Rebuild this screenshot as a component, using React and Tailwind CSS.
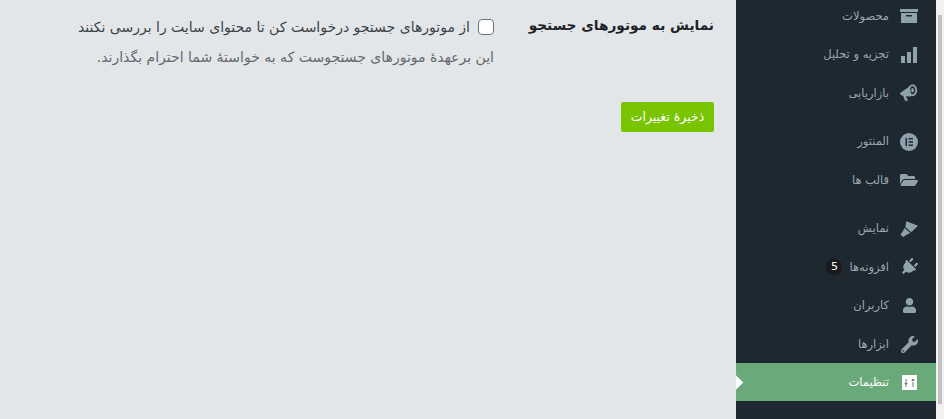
import { FaFolderOpen, FaUser, FaWrench, FaPlug } from "react-icons/fa";

const ArchiveIcon = () => (
  <svg width="18" height="18" viewBox="0 0 18 18" fill="currentColor">
    <path d="M0 2h18v3H0z" />
    <path fillRule="evenodd" d="M1 6h16v10H1zM6 8v1.500h6V8z" />
  </svg>
);

const BarsIcon = () => (
  <svg width="18" height="18" viewBox="0 0 18 18" fill="currentColor">
    <path d="M1 10h4v7H1zM7 6h4v11H7zM13 1h4v16h-4z" />
  </svg>
);

const MegaphoneIcon = () => (
  <svg width="20" height="20" viewBox="0 0 20 20" fill="currentColor">
    <path d="M0 10L11 2.500l1.500 11.500-6-.5 2.500 5H5.500L3.500 13 1 12.500z" />
    <path fillRule="evenodd" d="M14 .5c3 0 5 3 5 6.500s-2 6.500-5 6.500-5-3-5-6.500 2-6.500 5-6.500zM14 2.500c-1.700 0-3 2-3 4.500s1.300 4.500 3 4.500 3-2 3-4.500-1.300-4.500-3-4.500z" />
    <ellipse cx="14" cy="7" rx="1.500" ry="2.500" />
  </svg>
);

const ElementorIcon = () => (
  <svg width="18" height="18" viewBox="0 0 18 18">
    <circle cx="9" cy="9" r="9" fill="currentColor" />
    <path d="M5.500 5h1.500v8H5.500zM8.500 5h4.500v1.500H8.500zM8.500 8.200h4.500v1.500H8.500zM8.500 11.500h4.500V13H8.500z" fill="#1c2833" />
  </svg>
);

const BrushIcon = () => (
  <svg width="20" height="20" viewBox="0 0 20 20" fill="currentColor">
    <path d="M7 1.500L20 6.500l-7.500 7L6 8z" />
    <path d="M5 9l6.500 5.500-2.500 1-5.500 3.500L.5 16.500 3.500 12z" />
  </svg>
);

const SettingsIcon = () => (
  <svg width="15" height="15" viewBox="0 0 15 15">
    <rect width="15" height="15" fill="#fff" />
    <path d="M4 4v4M4 10.500v1.500M11 4v1M11 7v5" stroke="#5f7f6a" strokeWidth="1" />
    <path d="M2.200 8h3.600L4 10.500zM9.200 6h3.600L11 3.500z" fill="#5f7f6a" />
  </svg>
);

const groups = [
  [
    { label: "محصولات", icon: <ArchiveIcon /> },
    { label: "تجزیه و تحلیل", icon: <BarsIcon /> },
    { label: "بازاریابی", icon: <MegaphoneIcon /> },
  ],
  [
    { label: "المنتور", icon: <ElementorIcon /> },
    { label: "قالب ها", icon: <FaFolderOpen size={18} /> },
  ],
  [
    { label: "نمایش", icon: <BrushIcon /> },
    { label: "افزونه‌ها", icon: <FaPlug size={18} className="rotate-45" />, badge: 5 },
    { label: "کاربران", icon: <FaUser size={15} /> },
    { label: "ابزارها", icon: <FaWrench size={17} /> },
    { label: "تنظیمات", icon: <SettingsIcon />, active: true },
  ],
];

const MenuRow = ({ item }) => (
  <div
    className={
      item.active
        ? "relative h-[38.500px] pt-[2px] flex items-center pr-[18px] gap-[11px] bg-[#6aa97a] text-white"
        : "h-[38.500px] pt-[2px] flex items-center pr-[18px] gap-[11px] text-[#9aa6ad]"
    }
  >
    <span className={item.active ? "w-[18px] flex justify-center" : "w-[18px] flex justify-center text-[#8fa1ab]"}>{item.icon}</span>
    <span className="text-[11.500px] leading-none">{item.label}</span>
    {item.badge && (
      <span className="w-[16px] h-[16px] -mr-[4px] rounded-full bg-[#181a1b] text-white text-[11px] flex items-center justify-center">
        {item.badge}
      </span>
    )}
    {item.active && (
      <span className="absolute left-0 top-[14px] w-[11px] h-[11px] -ml-[6px] rotate-45 bg-white" />
    )}
  </div>
);

export default function App() {
  return (
    <div
      dir="rtl"
      className="w-[944px] h-[419px] overflow-hidden flex bg-[#e2e6e9]"
      style={{ fontFamily: '"DejaVu Sans", sans-serif' }}
    >
      {/* scrollbar edge */}
      <div className="w-2 shrink-0 bg-[#f1f1f1] px-[2px] pt-[15px]">
        <div className="h-[389px] bg-[#c1c1c1]" />
      </div>

      {/* sidebar */}
      <aside className="w-[200px] shrink-0 bg-[#1d2831] overflow-hidden">
        <div className="-mt-[4px] flex flex-col gap-[10px]">
          {groups.map((group, i) => (
            <div key={i}>
              {group.map((item) => (
                <MenuRow key={item.label} item={item} />
              ))}
            </div>
          ))}
        </div>
      </aside>

      {/* content */}
      <main className="flex-1 pr-[22px] pt-[15px]">
        <div className="flex">
          <h2 className="w-[220px] shrink-0 text-[13.700px] font-bold leading-[20px] text-[#1d2327] whitespace-nowrap">
            نمایش به موتورهای جستجو
          </h2>
          <div>
            <label className="flex items-center gap-[8px] text-[14px] leading-[24px] text-[#3c434a] whitespace-nowrap">
              <input type="checkbox" className="appearance-none w-4 h-4 rounded-[4px] border border-[#6b7580] bg-white" />
              از موتورهای جستجو درخواست کن تا محتوای سایت را بررسی نکنند
            </label>
            <p className="mt-[6px] text-[14px] leading-[24px] text-[#646970] whitespace-nowrap">
              این برعهدهٔ موتورهای جستجوست که به خواستهٔ شما احترام بگذارند.
            </p>
          </div>
        </div>
        <button className="block mt-[33px] h-[30px] w-[93px] rounded-[2px] bg-[#78c400] text-white text-[12.500px]">
          ذخیرهٔ تغییرات
        </button>
      </main>
    </div>
  );
}
